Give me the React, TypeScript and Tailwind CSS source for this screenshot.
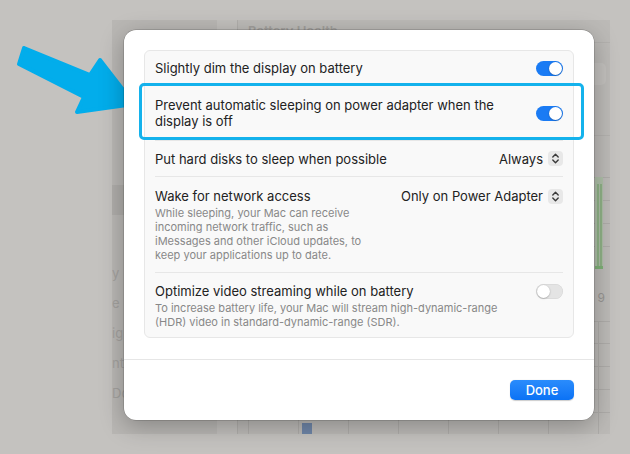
import type { ReactNode } from "react";

const FONT = "font-['Inter','Liberation_Sans',sans-serif]";

/** macOS-style small switch */
function Toggle({ on }: { on: boolean }) {
  if (on) {
    return (
      <span className="flex h-[15px] w-[27px] shrink-0 items-center justify-end rounded-full bg-[#1a7bf4] px-[1px]">
        <span className="h-[13px] w-[13px] rounded-full bg-white shadow-[0_0.5px_1.5px_rgba(0,0,0,0.35)]" />
      </span>
    );
  }
  return (
    <span className="flex h-[15px] w-[27px] shrink-0 items-center rounded-full bg-[#e4e4e4] px-[1px] shadow-[inset_0_0_0_0.5px_rgba(0,0,0,0.08)]">
      <span className="h-[13px] w-[13px] rounded-full bg-white shadow-[0_0.5px_1.5px_rgba(0,0,0,0.35)]" />
    </span>
  );
}

function Popup({ value }: { value: string }) {
  return (
    <span className="flex shrink-0 items-center gap-[5px] text-[13px] leading-[16px] text-[#222]">
      {value}
      <span className="flex h-[15px] w-[15px] items-center justify-center rounded-[4px] bg-[#e8e8e8]">
        <svg width="15" height="15" viewBox="0 0 15 15" fill="none" stroke="#3a3a3a" strokeWidth="1.4" strokeLinecap="round" strokeLinejoin="round">
          <path d="M4.8 6 L7.5 3.3 L10.2 6" />
          <path d="M4.8 9 L7.5 11.7 L10.2 9" />
        </svg>
      </span>
    </span>
  );
}

function Row({
  title,
  desc,
  control,
  className,
  last,
}: {
  title: string;
  desc?: string;
  control: ReactNode;
  className: string;
  last?: boolean;
}) {
  return (
    <div
      className={`mx-[10px] flex gap-6 ${last ? "" : "border-b border-[#e7e7e7]"} ${className}`}
    >
      <div className="min-w-0 flex-1">
        <div className="text-[13px] leading-[16px] text-[#222]">{title}</div>
        {desc && (
          <div className="mt-[2px] text-[11px] leading-[14px] text-[#888]">{desc}</div>
        )}
      </div>
      <div className="flex h-[16px] shrink-0 items-center">{control}</div>
    </div>
  );
}

const COLS = [0, 1, 2, 3, 4, 5, 6, 7];

function Chart({ h, rows, bar }: { h: string; rows: number; bar: "green" | "blue" }) {
  return (
    <div className={`flex ${h}`}>
      {COLS.map((c) => (
        <div key={c} className="relative flex w-[50px] shrink-0 flex-col border-l border-[#aeaca9]">
          {Array.from({ length: rows }).map((_, i) => (
            <div key={i} className="flex-1 border-t border-[#aeaca9]" />
          ))}
          {bar === "green" && c === 7 && (
            <>
              <div className="absolute bottom-0 left-[-4px] flex h-full w-[8px] items-end gap-[1px] bg-[#aebfa8] pl-[2px]">
                <div className="h-[92%] w-[2px] bg-[#8fb287]" />
                <div className="h-[92%] w-[2px] bg-[#8fb287]" />
              </div>
              <div className="absolute bottom-0 left-[-4px] h-[3px] w-[8px] bg-[#7fb177]" />
            </>
          )}
          {bar === "blue" && c === 1 && (
            <div className="absolute bottom-0 left-[3px] h-[12px] w-[10px] bg-[#6f86a8]" />
          )}
        </div>
      ))}
    </div>
  );
}

export default function App() {
  return (
    <div className={`relative h-[454px] w-[630px] overflow-hidden bg-[#c4c2bf] pl-[112px] pt-[20px] ${FONT}`}>
      {/* dimmed window behind the sheet */}
      <div className="flex h-[414px] w-[498px] overflow-hidden bg-[#bcbab7]">
        <div className="flex w-[105px] shrink-0 flex-col bg-[#b9b7b4] pt-[165px] text-[13px] text-[#a3a19e]">
          <div className="h-[30px] bg-[#afadaa]" />
          <div className="mt-[50px] flex flex-col gap-[13px] leading-[17px]">
            <span>y</span>
            <span>e</span>
            <span>ig</span>
            <span>nte</span>
            <span>Do</span>
          </div>
        </div>
        <div className="w-[20px] shrink-0 bg-[#c1bfbc]" />
        <div className="flex min-w-0 flex-1 flex-col border-l border-[#b0aeab] pl-[10px]">
          <div className="h-[32px] border-b border-[#b3b1ae] pt-[2px] text-[13px] font-semibold text-[#a19f9c]">
            Battery Health
          </div>
          <div className="mt-[20px] flex justify-end pr-[4px]">
            <div className="flex h-[22px] items-center gap-6 rounded-[5px] bg-[#c2c0bd] px-3 text-[12px] text-[#8c8a87]">
              <span>Last 24 Hours</span>
              <span>Last 10 Days</span>
            </div>
          </div>
          <div className="mt-[50px] border-t border-[#b3b1ae]" />
          <div className="mt-[41px]">
            <Chart h="h-[92px]" rows={4} bar="green" />
          </div>
          <div className="flex justify-end pr-[5px] pt-[22px] text-[12px] leading-[14px] text-[#989693]">9</div>
          <div className="mt-[16px]">
            <Chart h="h-[114px]" rows={5} bar="blue" />
          </div>
        </div>
      </div>

      {/* annotation arrow */}
      <svg className="absolute left-0 top-0" width="140" height="120" viewBox="0 0 140 120">
        <path
          d="M24 48 L90 75 L100 60 L134 104 L77 112 L84 97 L19 64 Z"
          fill="#02adeb"
          stroke="#02adeb"
          strokeWidth="4"
          strokeLinejoin="round"
        />
      </svg>

      {/* sheet */}
      <div className="absolute left-[124px] top-[30px] flex h-[390px] w-[470px] flex-col rounded-[12px] bg-white shadow-[0_0_0_0.5px_rgba(0,0,0,0.25),0_6px_24px_rgba(0,0,0,0.28)]">
        <div className="px-[20px] pt-[20px]">
          <div className="rounded-[6px] border border-[#e7e7e7] bg-[#f9f9f9]">
            <Row
              className="h-[35px] items-center"
              title="Slightly dim the display on battery"
              control={<Toggle on />}
            />
            <div className="relative">
              <Row
                className="h-[55px] items-center"
                title="Prevent automatic sleeping on power adapter when the display is off"
                control={<Toggle on />}
              />
              <span className="pointer-events-none absolute bottom-[1px] left-[-6px] right-[-11px] top-[-3px] rounded-[5px] border-[3.5px] border-[#14b2ec]" />
            </div>
            <Row
              className="h-[36px] items-center"
              title="Put hard disks to sleep when possible"
              control={<Popup value="Always" />}
            />
            <Row
              className="items-start pb-[10px] pt-[11px]"
              title="Wake for network access"
              desc="While sleeping, your Mac can receive incoming network traffic, such as iMessages and other iCloud updates, to keep your applications up to date."
              control={<Popup value="Only on Power Adapter" />}
            />
            <Row
              last
              className="items-start pb-[8px] pt-[10px]"
              title="Optimize video streaming while on battery"
              desc="To increase battery life, your Mac will stream high-dynamic-range (HDR) video in standard-dynamic-range (SDR)."
              control={<Toggle on={false} />}
            />
          </div>
        </div>
        <div className="mt-auto flex h-[61px] items-center justify-end border-t border-[#e6e6e6] px-[20px]">
          <button className="h-[20px] w-[64px] rounded-[5px] bg-gradient-to-b from-[#2a8cfc] to-[#0a72f5] text-[13px] font-medium leading-[20px] text-white shadow-[0_0.5px_1px_rgba(0,0,0,0.2)]">
            Done
          </button>
        </div>
      </div>
    </div>
  );
}
